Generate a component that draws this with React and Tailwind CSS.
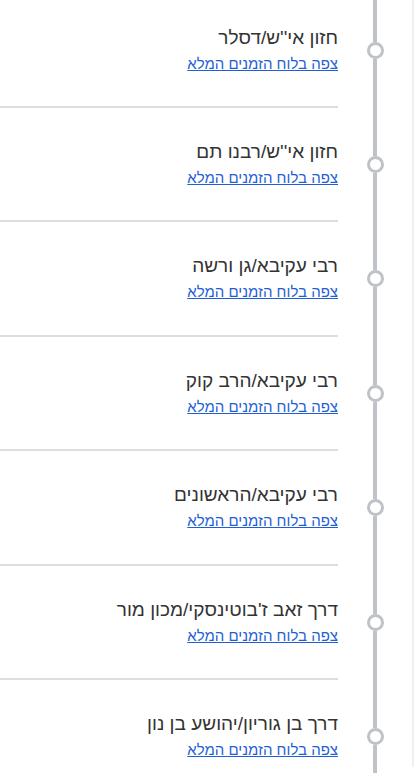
const stops = [
  "חזון אי''ש/דסלר",
  "חזון אי''ש/רבנו תם",
  'רבי עקיבא/גן ורשה',
  'רבי עקיבא/הרב קוק',
  'רבי עקיבא/הראשונים',
  "דרך זאב ז'בוטינסקי/מכון מור",
  'דרך בן גוריון/יהושע בן נון',
];

function StopRow({ name, first }) {
  return (
    <div className={`flex h-[114.4px] ${first ? '-mt-[6.4px]' : ''}`}>
      <div className="flex w-[74px] shrink-0 flex-col items-center">
        <div className="h-[48px] w-[4px] bg-[#bfc2c6]" />
        <div className="h-[17px] w-[17px] shrink-0 rounded-full border-[3px] border-[#bfc2c6] bg-white" />
        <div className="w-[4px] flex-1 bg-[#bfc2c6]" />
      </div>
      <div className="flex-1 border-b-2 border-[#dedede] pt-[32px] pl-2">
        <div className="text-[19px] leading-[23px] text-[#333333]">{name}</div>
        <a href="#" className="mt-[6px] block text-[15px] leading-[18px] text-[#1f5fd6] underline">
          צפה בלוח הזמנים המלא
        </a>
      </div>
    </div>
  );
}

export default function App() {
  return (
    <div
      dir="rtl"
      className="h-[773px] w-[417px] overflow-hidden bg-white"
      style={{ fontFamily: '"Liberation Sans", Arial, sans-serif' }}
    >
      <div className="mr-auto h-full w-[414px] border-r-2 border-[#eef0f3]">
        {stops.map((s, i) => (
          <StopRow key={i} name={s} first={i === 0} />
        ))}
      </div>
    </div>
  );
}
